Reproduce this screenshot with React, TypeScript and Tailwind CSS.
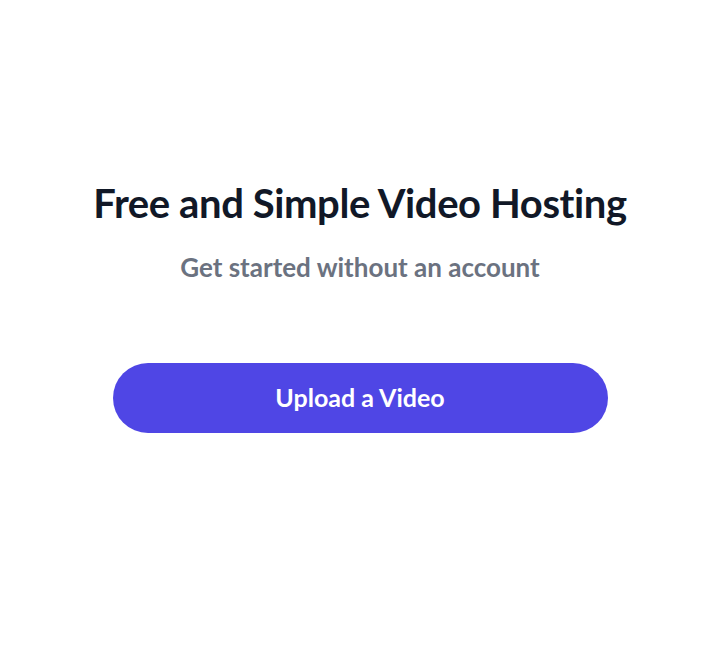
export default function App() {
  return (
    <div
      className="min-h-[652px] w-full bg-white flex flex-col items-center pt-[178px]"
      style={{ fontFamily: "Lato, 'Noto Sans', sans-serif" }}
    >
      <h1 className="text-[40px] leading-[50px] font-bold text-[#111827] tracking-[-0.01em]">
        Free and Simple Video Hosting
      </h1>
      <p className="mt-[23px] text-[26px] leading-[32px] font-bold text-[#6b7280]">
        Get started without an account
      </p>
      <button className="mt-[80px] w-[495px] h-[70px] rounded-full bg-[#4f46e5] text-white text-[25px] font-bold">
        Upload a Video
      </button>
    </div>
  );
}
